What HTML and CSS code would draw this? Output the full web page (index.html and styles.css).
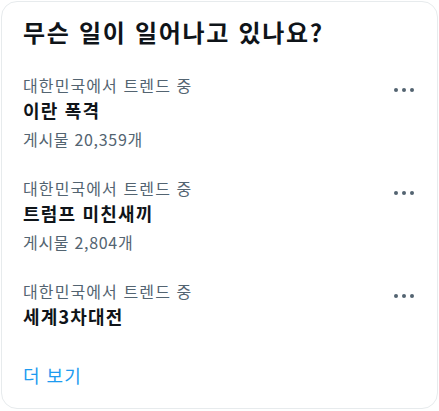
FILE: index.html
```html
<!DOCTYPE html>
<html lang="ko">
<head>
<meta charset="utf-8">
<link rel="stylesheet" href="styles.css">
</head>
<body>
<section class="card">
  <h2 class="head">무슨 일이 일어나고 있나요?</h2>
  <div class="trend">
    <div class="info">
      <div class="meta">대한민국에서 트렌드 중</div>
      <div class="name">이란 폭격</div>
      <div class="meta count">게시물 20,359개</div>
    </div>
    <div class="more-btn"><span></span><span></span><span></span></div>
  </div>
  <div class="trend">
    <div class="info">
      <div class="meta">대한민국에서 트렌드 중</div>
      <div class="name">트럼프 미친새끼</div>
      <div class="meta count">게시물 2,804개</div>
    </div>
    <div class="more-btn"><span></span><span></span><span></span></div>
  </div>
  <div class="trend">
    <div class="info">
      <div class="meta">대한민국에서 트렌드 중</div>
      <div class="name">세계3차대전</div>
    </div>
    <div class="more-btn"><span></span><span></span><span></span></div>
  </div>
  <a class="show-more" href="#">더 보기</a>
</section>
</body>
</html>
```
FILE: styles.css
```css
html, body {
  margin: 0;
  padding: 0;
  background: #ffffff;
}
body {
  padding: 1px;
  font-family: "Noto Sans CJK KR", "Noto Sans", sans-serif;
  color: #0f1419;
}
.card {
  box-sizing: border-box;
  width: 437px;
  height: 408px;
  border: 1px solid #e7ebed;
  border-radius: 16px;
  display: flex;
  flex-direction: column;
}
.head {
  margin: 0;
  padding: 13px 21px 11px;
  font-size: 24px;
  line-height: 34px;
  font-weight: 700;
  letter-spacing: 1.7px;
}
.trend {
  display: flex;
  justify-content: space-between;
  align-items: flex-start;
  padding: 13px 21px 11px 21px;
}
.info {
  display: flex;
  flex-direction: column;
}
.meta {
  font-size: 16px;
  line-height: 24px;
  letter-spacing: 1.1px;
  color: #536471;
}
.name {
  font-size: 18px;
  line-height: 26px;
  font-weight: 700;
  letter-spacing: 1.2px;
}
.count {
  line-height: 26px;
  margin-top: 3px;
  letter-spacing: 0.7px;
}
.more-btn {
  display: flex;
  gap: 4px;
  margin-top: 15px;
  padding-right: 2px;
}
.more-btn span {
  width: 4px;
  height: 4px;
  border-radius: 50%;
  background: #536471;
}
.show-more {
  padding: 21px 21px 0;
  font-size: 18px;
  line-height: 28px;
  letter-spacing: 1px;
  color: #1d9bf0;
  text-decoration: none;
}
```
